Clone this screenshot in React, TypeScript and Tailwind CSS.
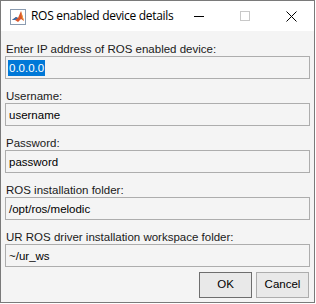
import React from "react";

const fields = [
  { label: "Enter IP address of ROS enabled device:", value: "0.0.0.0", selected: true },
  { label: "Username:", value: "username" },
  { label: "Password:", value: "password" },
  { label: "ROS installation folder:", value: "/opt/ros/melodic" },
  { label: "UR ROS driver installation workspace folder:", value: "~/ur_ws" },
];

function MatlabIcon() {
  return (
    <svg width="16" height="16" viewBox="0 0 16 16">
      <rect x="0.5" y="0.5" width="15" height="15" fill="#ffffff" stroke="#8a9bb0" />
      <path d="M2 11 L6 8 L8 9 L11 2 L14 12 L11 10 L8 13 L5 11 Z" fill="#d9572c" />
      <path d="M2 11 L6 8 L8 9 L5 11 Z" fill="#2f6fb3" />
      <path d="M11 2 L14 12 L12 9 Z" fill="#f2a33a" />
    </svg>
  );
}

export default function App() {
  return (
    <div className="w-[316px] h-[304px] bg-white">
      <div className="w-[315px] h-[303px] flex flex-col border border-[#7a7a7a] bg-[#f4f4f4] font-['Liberation_Sans',Arial,sans-serif] text-[11.5px] text-[#1a1a1a]">
        {/* Title bar */}
        <div className="h-[30px] bg-white flex items-center">
          <div className="ml-[9px] mt-[1px] shrink-0">
            <MatlabIcon />
          </div>
          <span className="ml-[5px] whitespace-nowrap font-['Open_Sans',sans-serif] text-[12px] text-black tracking-[-0.3px]">
            ROS enabled device details
          </span>
          <div className="ml-auto flex items-center h-full shrink-0">
            <div className="w-[46px] h-full flex items-center justify-center">
              <div className="w-[10px] h-px bg-black" />
            </div>
            <div className="w-[46px] h-full flex items-center justify-center">
              <div className="w-[10px] h-[10px] border border-[#c8c8c8]" />
            </div>
            <div className="w-[46px] h-full flex items-center justify-center">
              <svg width="11" height="11" viewBox="0 0 11 11">
                <path d="M0.5 0.5 L10.5 10.5 M10.5 0.5 L0.5 10.5" stroke="#000" strokeWidth="1" />
              </svg>
            </div>
          </div>
        </div>

        {/* Body */}
        <div className="flex flex-col px-[4px] pt-[11px]">
          {fields.map((f, i) => (
            <div key={f.label} className={i === 0 ? "" : "mt-[10px]"}>
              <div className="h-[14px] leading-[14px] pl-[1px] whitespace-nowrap">{f.label}</div>
              <div className="h-[23px] w-[305px] border border-[#adadad] flex items-center px-[2px]">
                {f.selected ? (
                  <span className="bg-[#0078d7] text-white leading-[16px] px-px">{f.value}</span>
                ) : (
                  <span className="leading-[16px] pl-px text-black">{f.value}</span>
                )}
              </div>
            </div>
          ))}
          <div className="flex justify-end gap-[4px] mt-[5px] pr-[1px]">
            <button className="w-[53px] h-[26px] bg-[#e9e9e9] border border-[#6e6e6e] text-black text-[11.5px]">
              OK
            </button>
            <button className="w-[53px] h-[26px] bg-[#e9e9e9] border border-[#adadad] text-black text-[11.5px]">
              Cancel
            </button>
          </div>
        </div>
      </div>
    </div>
  );
}
